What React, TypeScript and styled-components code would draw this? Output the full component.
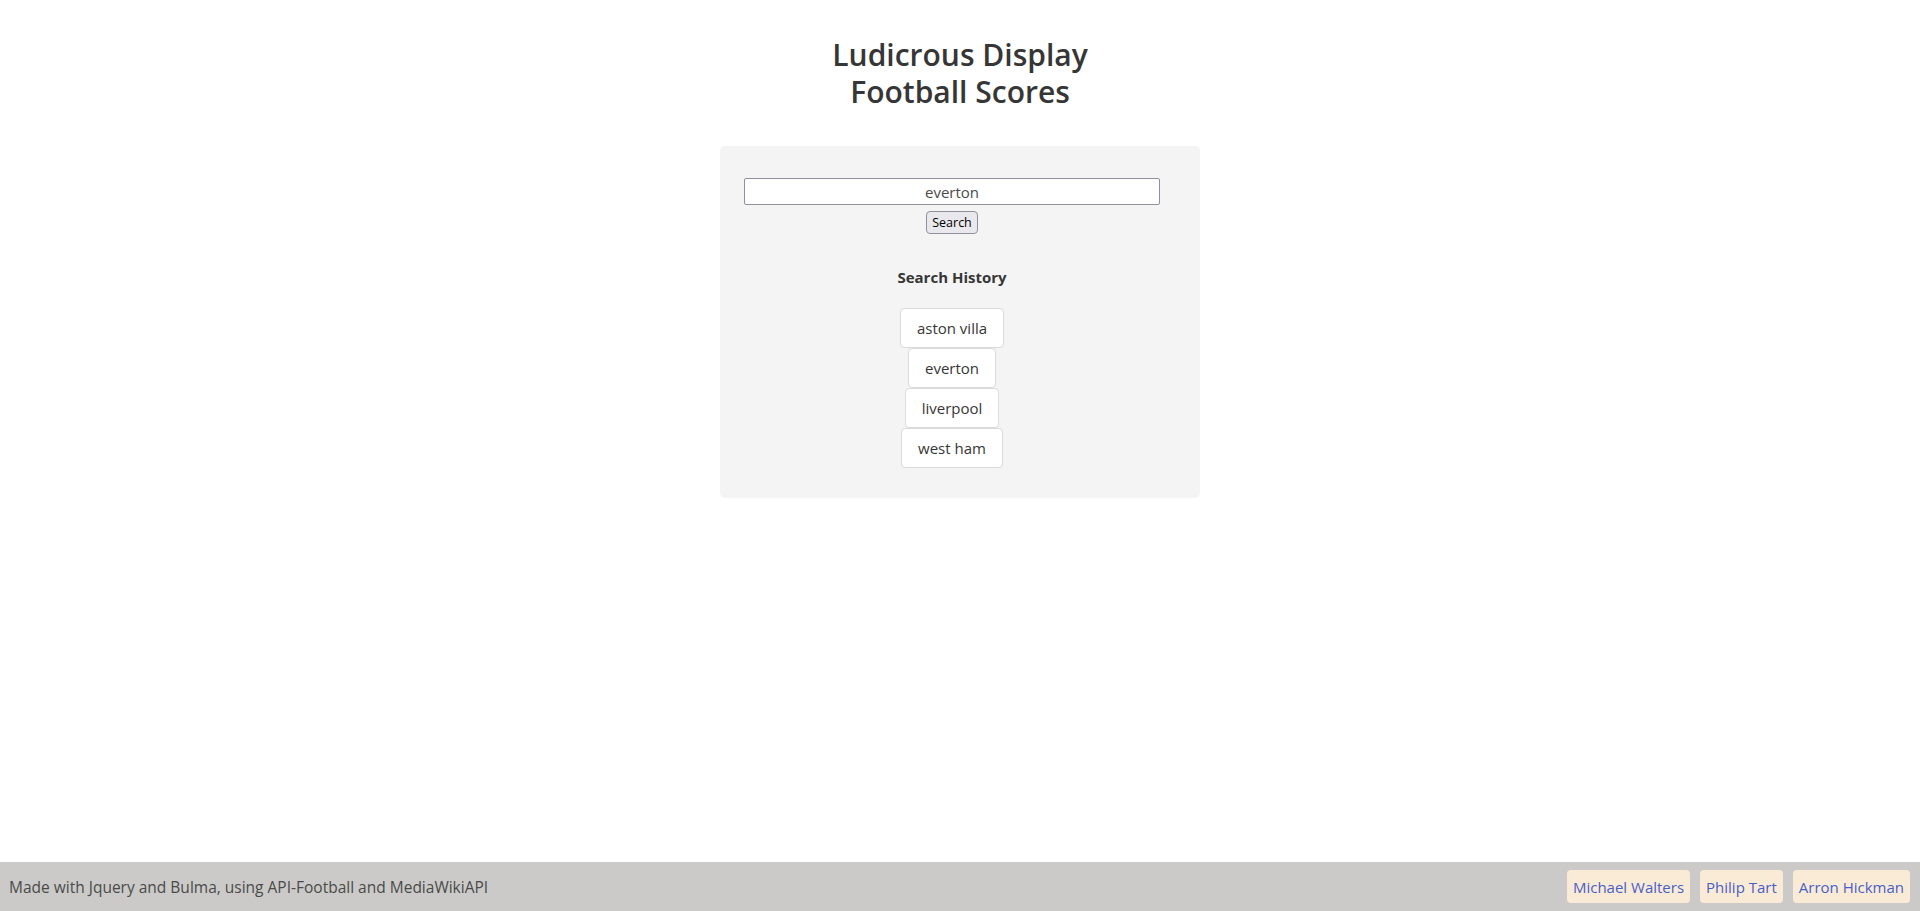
import styled, { createGlobalStyle } from "styled-components";

const GlobalStyle = createGlobalStyle`
  html, body {
    margin: 0;
    padding: 0;
    background: #ffffff;
  }

  body {
    font-family: "Open Sans", "Noto Sans", "Liberation Sans", sans-serif;
    color: #4a4a4a;
  }

  * {
    box-sizing: border-box;
  }
`;

const Page = styled.div`
  min-height: 100vh;
  display: flex;
  flex-direction: column;
`;

const Main = styled.main`
  flex: 1;
  display: flex;
  flex-direction: column;
  align-items: center;
  padding-top: 36px;
`;

const Title = styled.h1`
  margin: 0;
  font-size: 30px;
  line-height: 37px;
  font-weight: 600;
  color: #363636;
  text-align: center;
`;

const Card = styled.section`
  width: 480px;
  margin-top: 36px;
  padding: 32px 40px 30px 24px;
  background-color: #f4f4f4;
  border-radius: 5px;
  display: flex;
  flex-direction: column;
  align-items: center;
`;

const SearchForm = styled.form`
  width: 100%;
  display: flex;
  flex-direction: column;
  align-items: center;
  gap: 6px;
`;

const SearchInput = styled.input`
  width: 100%;
  height: 27px;
  padding: 0 4px;
  border: 1px solid #8f8f9d;
  border-radius: 2px;
  background: #ffffff;
  font-family: inherit;
  font-size: 15px;
  color: #4a4a4a;
  text-align: center;
  outline: none;
`;

const SearchButton = styled.button`
  height: 23px;
  padding: 0 5px;
  border: 1px solid #8f8f9d;
  border-radius: 4px;
  background-color: #e9e9ed;
  font-family: inherit;
  font-size: 12.5px;
  color: #000000;
  cursor: pointer;
`;

const HistoryHeading = styled.h2`
  margin: 31px 0 19px;
  font-size: 15px;
  line-height: 24px;
  font-weight: 700;
  color: #363636;
`;

const HistoryList = styled.div`
  display: flex;
  flex-direction: column;
  align-items: center;
`;

const HistoryButton = styled.button`
  height: 40px;
  padding: 0 16px;
  border: 1px solid #dbdbdb;
  border-radius: 4px;
  background-color: #ffffff;
  font-family: inherit;
  font-size: 15px;
  color: #363636;
  cursor: pointer;
`;

const Footer = styled.footer`
  height: 49px;
  padding: 0 10px 0 9px;
  background-color: #cbcac8;
  display: flex;
  align-items: center;
  justify-content: space-between;
`;

const FooterText = styled.p`
  margin: 0;
  font-size: 15.5px;
  color: #4a4a4a;
`;

const Credits = styled.div`
  display: flex;
  gap: 10px;
`;

const CreditLink = styled.a`
  height: 33px;
  padding: 0 6px;
  display: inline-flex;
  align-items: center;
  border-radius: 4px;
  background-color: #faebd7;
  font-size: 15px;
  color: #485fc7;
  text-decoration: none;
`;

const history = ["aston villa", "everton", "liverpool", "west ham"];
const authors = ["Michael Walters", "Philip Tart", "Arron Hickman"];

function App() {
  return (
    <>
      <GlobalStyle />
      <Page>
        <Main>
          <Title>
            Ludicrous Display
            <br />
            Football Scores
          </Title>

          <Card>
            <SearchForm onSubmit={(e) => e.preventDefault()}>
              <SearchInput type="text" defaultValue="everton" />
              <SearchButton type="submit">Search</SearchButton>
            </SearchForm>

            <HistoryHeading>Search History</HistoryHeading>
            <HistoryList>
              {history.map((team) => (
                <HistoryButton key={team}>{team}</HistoryButton>
              ))}
            </HistoryList>
          </Card>
        </Main>

        <Footer>
          <FooterText>
            Made with Jquery and Bulma, using API-Football and MediaWikiAPI
          </FooterText>
          <Credits>
            {authors.map((name) => (
              <CreditLink key={name} href="#">
                {name}
              </CreditLink>
            ))}
          </Credits>
        </Footer>
      </Page>
    </>
  );
}

export default App;
